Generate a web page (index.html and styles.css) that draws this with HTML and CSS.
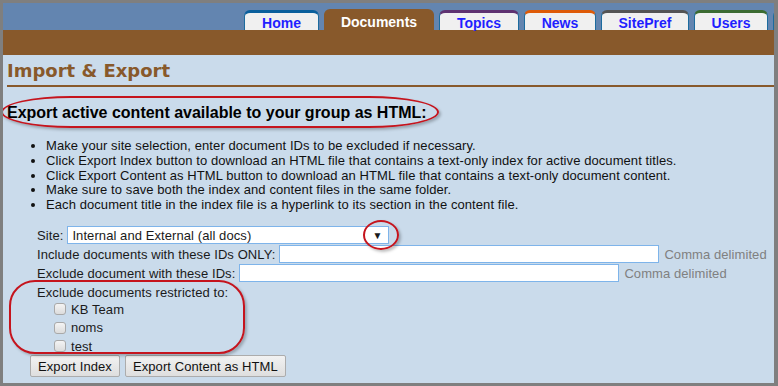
FILE: index.html
```html
<!DOCTYPE html>
<html lang="en">

<head>
    <meta charset="UTF-8">
    <title>Import &amp; Export</title>
    <link rel="stylesheet" href="styles.css">
</head>

<body>
    <div class="page">
        <div class="topbar">
            <ul class="tabs">
                <li class="tab tab-home"><a href="#">Home</a></li>
                <li class="tab tab-docs active"><a href="#">Documents</a></li>
                <li class="tab tab-topics"><a href="#">Topics</a></li>
                <li class="tab tab-news"><a href="#">News</a></li>
                <li class="tab tab-sitepref"><a href="#">SitePref</a></li>
                <li class="tab tab-users"><a href="#">Users</a></li>
                <li class="tab tab-more"></li>
            </ul>
        </div>
        <div class="subbar"></div>

        <div class="content">
            <h1 class="page-title">Import &amp; Export</h1>

            <h2 class="section-title">Export active content available to your group as HTML:</h2>
            <ul class="help">
                <li>Make your site selection, enter document IDs to be excluded if necessary.</li>
                <li>Click Export Index button to download an HTML file that contains a text-only index for active document titles.</li>
                <li>Click Export Content as HTML button to download an HTML file that contains a text-only document content.</li>
                <li>Make sure to save both the index and content files in the same folder.</li>
                <li>Each document title in the index file is a hyperlink to its section in the content file.</li>
            </ul>

            <form class="export-form">
                <div class="row">
                    <label>Site:</label>
                    <div class="select">
                        <span>Internal and External (all docs)</span>
                        <span class="arrow">&#9660;</span>
                    </div>
                </div>
                <div class="row">
                    <label>Include documents with these IDs ONLY:</label>
                    <input type="text" class="ids">
                    <span class="hint">Comma delimited</span>
                </div>
                <div class="row">
                    <label>Exclude document with these IDs:</label>
                    <input type="text" class="ids">
                    <span class="hint">Comma delimited</span>
                </div>
                <div class="row">Exclude documents restricted to:</div>
                <div class="groups">
                    <label class="check"><span class="box"></span>KB Team</label>
                    <label class="check"><span class="box"></span>noms</label>
                    <label class="check"><span class="box"></span>test</label>
                </div>
                <div class="buttons">
                    <button type="button">Export Index</button>
                    <button type="button">Export Content as HTML</button>
                </div>
            </form>
        </div>

        <!-- red annotation marks -->
        <div class="mark mark-title"></div>
        <div class="mark mark-arrow"></div>
        <div class="mark mark-groups"></div>
    </div>
</body>

</html>
```

FILE: styles.css
```css
body {
    margin: 0;
    background-color: #7f7f7f;
    font-family: "Liberation Sans", Arial, sans-serif;
    font-size: 13px;
    letter-spacing: 0.08px;
    color: #111;
}

.page {
    position: relative;
    margin: 3px 4px 0 3px;
    height: 380px;
    background-color: #cadbeb;
    overflow: hidden;
}

.topbar {
    height: 27px;
    background-color: #6385b0;
}

.subbar {
    height: 25px;
    background-color: #88592b;
}

.tabs {
    list-style: none;
    margin: 0;
    padding: 0 0 0 241px;
    display: flex;
    gap: 5px;
    align-items: flex-end;
    height: 27px;
}

.tab {
    height: 20px;
    box-sizing: border-box;
    background-color: #f0f0f0;
    border: 1px solid #1c6b9e;
    border-top: 3px solid #0a5f9c;
    border-bottom: none;
    border-radius: 6px 6px 0 0;
    text-align: center;
    flex: none;
}

.tab a {
    display: block;
    padding-top: 2px;
    font-weight: bold;
    font-size: 14px;
    line-height: 16px;
    letter-spacing: 0;
    color: #1f1fff;
    text-decoration: none;
}

.tab-home { width: 75px; }
.tab-docs { width: 110px; }
.tab-topics { width: 80px; border-top-color: #5e3271; }
.tab-news { width: 72px; border-top-color: #de5a07; }
.tab-sitepref { width: 88px; border-top-color: #545454; }
.tab-users { width: 74px; border-top-color: #3b6b31; }
.tab-more { width: 74px; border-top-color: #b59a2a; }

.tab.active {
    height: 21px;
    background-color: #88592b;
    border: 1px solid #88592b;
    border-top: 3px solid #88592b;
}

.tab.active a {
    color: #fff;
}

.content {
    padding: 0 0 0 4px;
}

.page-title {
    margin: 0;
    padding: 6px 0 4px;
    font-family: "DejaVu Sans", Verdana, sans-serif;
    font-size: 18px;
    font-weight: bold;
    letter-spacing: 0;
    color: #88592b;
    border-bottom: 2px solid #88592b;
    line-height: 20px;
}

.section-title {
    margin: 16px 0 0;
    font-size: 16px;
    font-weight: bold;
    letter-spacing: 0;
    color: #000;
    line-height: 19px;
}

.help {
    margin: 17px 0 0;
    padding-left: 39px;
    line-height: 14.8px;
}

.export-form {
    margin: 13px 0 0 30px;
    color: #1a1a1a;
}

.row {
    display: flex;
    align-items: center;
    height: 19px;
}

.row label {
    margin-right: 4px;
}

.select {
    width: 322px;
    height: 18px;
    box-sizing: border-box;
    background-color: #fff;
    border: 1px solid #7eb4ea;
    display: flex;
    align-items: center;
    justify-content: space-between;
    padding: 0 4px 0 4px;
}

.arrow {
    font-size: 10px;
    padding-right: 2px;
}

.ids {
    width: 380px;
    height: 18px;
    box-sizing: border-box;
    margin: 0;
    border: 1px solid #7eb4ea;
    background-color: #fff;
}

.hint {
    color: #808080;
    margin-left: 5px;
}

.groups {
    margin-top: -2px;
    padding-left: 17px;
}

.check {
    display: flex;
    align-items: center;
    height: 18.5px;
}

.box {
    width: 10px;
    height: 10px;
    border: 1px solid #a9a9a9;
    border-radius: 3px;
    background: linear-gradient(#f4f4f4, #dcdcdc);
    margin-right: 5px;
}

.buttons {
    display: flex;
    gap: 5px;
    margin: 0 0 0 -7px;
}

.buttons button {
    font-family: "Liberation Sans", Arial, sans-serif;
    font-size: 13px;
    letter-spacing: 0.08px;
    height: 22px;
    padding: 0 7px;
    color: #111;
    background: linear-gradient(#f2f2f2, #dedede);
    border: 1px solid #acacac;
    border-radius: 2px;
}

.mark {
    position: absolute;
    border: 2px solid #c5141d;
    box-shadow: 2px 2px 3px rgba(0, 0, 0, 0.25);
}

.mark-title {
    left: -2px;
    top: 93px;
    width: 434px;
    height: 28px;
    border-radius: 70px / 50%;
}

.mark-arrow {
    left: 360px;
    top: 217px;
    width: 32px;
    height: 26px;
    border-radius: 50%;
}

.mark-groups {
    left: 6px;
    top: 277px;
    width: 232px;
    height: 70px;
    border-radius: 26px;
}
```
